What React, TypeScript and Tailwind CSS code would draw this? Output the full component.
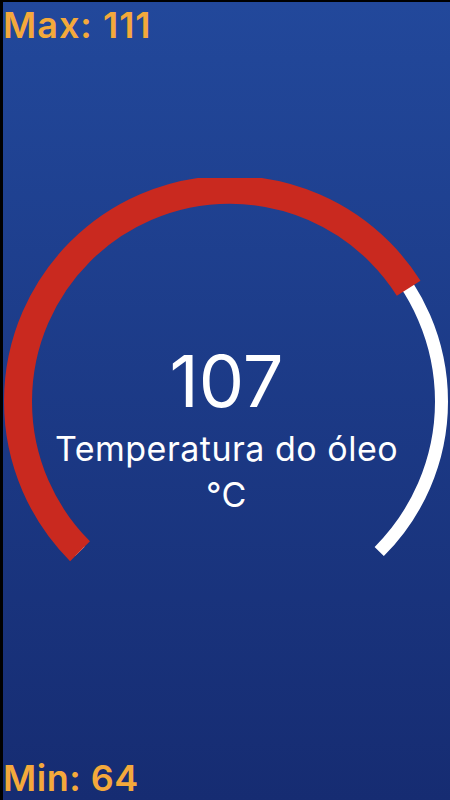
import React from "react";

type GaugeProps = {
  value: number;
  min: number;
  max: number;
  label: string;
  unit: string;
};

const SIZE = 447;
const CX = 226.75;
const CY = 223.5;
const R = 211.75;
const SWEEP = 270;

const Gauge: React.FC<GaugeProps> = ({ value, min, max, label, unit }) => {
  const circumference = 2 * Math.PI * R;
  const track = (circumference * SWEEP) / 360;
  const ratio = Math.min(Math.max((value - min) / (max - min), 0), 1);
  const filled = track * ratio;

  return (
    <div className="grid">
      <svg
        width={SIZE}
        height={SIZE}
        viewBox={`0 0 ${SIZE} ${SIZE}`}
        className="col-start-1 row-start-1 block"
      >
        <g transform={`rotate(135 ${CX} ${CY})`}>
          <circle
            cx={CX}
            cy={CY}
            r={R}
            fill="none"
            stroke="#ffffff"
            strokeWidth={13}
            strokeDasharray={`${track} ${circumference}`}
          />
          <circle
            cx={CX}
            cy={CY}
            r={R}
            fill="none"
            stroke="#c9291f"
            strokeWidth={28}
            strokeDasharray={`${filled} ${circumference}`}
          />
        </g>
      </svg>
      <div className="col-start-1 row-start-1 flex flex-col items-center justify-center pt-[55px] text-white font-['Inter',sans-serif]">
        <div className="text-[72px] leading-[80px] font-normal">{value}</div>
        <div className="mt-[5px] text-[34px] leading-[46px] tracking-[0.5px]">{label}</div>
        <div className="text-[34px] leading-[46px] tracking-[0.5px]">{unit}</div>
      </div>
    </div>
  );
};

export default function App() {
  return (
    <div className="w-[450px] h-[800px] overflow-hidden border-l-[3px] border-t-[2px] border-black bg-gradient-to-b from-[#22489b] to-[#162c72] flex flex-col font-['Inter',sans-serif]">
      <div className="pt-[1px] text-[36px] leading-[44px] font-semibold tracking-[1px] text-[#f4a93b]">
        Max: 111
      </div>
      <div className="flex-1 flex items-center justify-center">
        <Gauge value={107} min={0} max={150} label="Temperatura do óleo" unit="°C" />
      </div>
      <div className="text-[36px] leading-[44px] font-semibold tracking-[0.5px] text-[#f4a93b]">
        Min: 64
      </div>
    </div>
  );
}
